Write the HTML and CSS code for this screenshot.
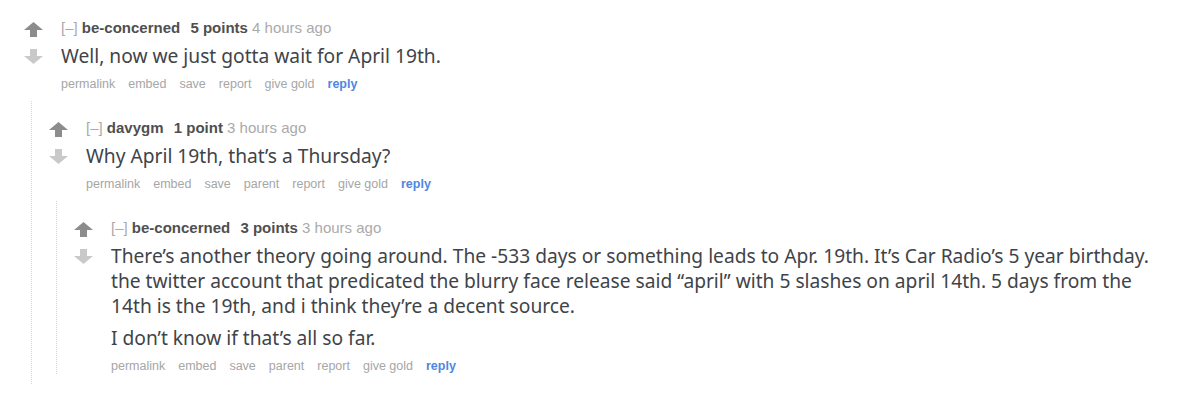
FILE: index.html
```html
<!DOCTYPE html>
<html lang="en">
<head>
    <meta charset="UTF-8">
    <meta name="viewport" content="width=device-width, initial-scale=1.0">
    <title>Comments</title>
    <link rel="stylesheet" href="styles.css">
</head>
<body>
    <div class="commentarea">
        <!-- primul comentariu -->
        <div class="comment">
            <div class="comment-row">
                <div class="midcol">
                    <svg class="arrow up" viewBox="0 0 19 15"><path d="M9.5 0 L19 8 H13 V15 H6 V8 H0 Z"/></svg>
                    <svg class="arrow down" viewBox="0 0 19 15"><path d="M9.5 15 L19 7 H13 V0 H6 V7 H0 Z"/></svg>
                </div>
                <div class="entry">
                    <p class="tagline">
                        <a class="expand" href="#">[–]</a>
                        <a class="author" href="#">be-concerned</a>
                        <span class="score">5 points</span>
                        <time>4 hours ago</time>
                    </p>
                    <div class="md">
                        <p>Well, now we just gotta wait for April 19th.</p>
                    </div>
                    <ul class="buttons">
                        <li><a href="#">permalink</a></li>
                        <li><a href="#">embed</a></li>
                        <li><a href="#">save</a></li>
                        <li><a href="#">report</a></li>
                        <li><a href="#">give gold</a></li>
                        <li><a class="reply" href="#">reply</a></li>
                    </ul>
                </div>
            </div>

            <div class="child">
                <div class="comment">
                    <div class="comment-row">
                        <div class="midcol">
                            <svg class="arrow up" viewBox="0 0 19 15"><path d="M9.5 0 L19 8 H13 V15 H6 V8 H0 Z"/></svg>
                            <svg class="arrow down" viewBox="0 0 19 15"><path d="M9.5 15 L19 7 H13 V0 H6 V7 H0 Z"/></svg>
                        </div>
                        <div class="entry">
                            <p class="tagline">
                                <a class="expand" href="#">[–]</a>
                                <a class="author" href="#">davygm</a>
                                <span class="score">1 point</span>
                                <time>3 hours ago</time>
                            </p>
                            <div class="md">
                                <p>Why April 19th, that’s a Thursday?</p>
                            </div>
                            <ul class="buttons">
                                <li><a href="#">permalink</a></li>
                                <li><a href="#">embed</a></li>
                                <li><a href="#">save</a></li>
                                <li><a href="#">parent</a></li>
                                <li><a href="#">report</a></li>
                                <li><a href="#">give gold</a></li>
                                <li><a class="reply" href="#">reply</a></li>
                            </ul>
                        </div>
                    </div>

                    <div class="child">
                        <div class="comment">
                            <div class="comment-row">
                                <div class="midcol">
                                    <svg class="arrow up" viewBox="0 0 19 15"><path d="M9.5 0 L19 8 H13 V15 H6 V8 H0 Z"/></svg>
                                    <svg class="arrow down" viewBox="0 0 19 15"><path d="M9.5 15 L19 7 H13 V0 H6 V7 H0 Z"/></svg>
                                </div>
                                <div class="entry">
                                    <p class="tagline">
                                        <a class="expand" href="#">[–]</a>
                                        <a class="author" href="#">be-concerned</a>
                                        <span class="score">3 points</span>
                                        <time>3 hours ago</time>
                                    </p>
                                    <div class="md">
                                        <p>There’s another theory going around. The -533 days or something leads to Apr. 19th. It’s Car Radio’s 5 year birthday. the twitter account that predicated the blurry face release said “april” with 5 slashes on april 14th. 5 days from the 14th is the 19th, and i think they’re a decent source.</p>
                                        <p>I don’t know if that’s all so far.</p>
                                    </div>
                                    <ul class="buttons">
                                        <li><a href="#">permalink</a></li>
                                        <li><a href="#">embed</a></li>
                                        <li><a href="#">save</a></li>
                                        <li><a href="#">parent</a></li>
                                        <li><a href="#">report</a></li>
                                        <li><a href="#">give gold</a></li>
                                        <li><a class="reply" href="#">reply</a></li>
                                    </ul>
                                </div>
                            </div>
                        </div>
                    </div>
                </div>
            </div>
        </div>
    </div>
</body>
</html>
```

FILE: styles.css
```css
body {
    background-color: #fff;
    margin: 0;
    font-family: 'Liberation Sans', Arial, sans-serif;
}

a {
    text-decoration: none;
}

.commentarea {
    padding: 18px 20px 0 24px;
}

.comment-row {
    display: flex;
    align-items: flex-start;
}

.midcol {
    width: 19px;
    flex: none;
    margin-right: 18px;
    padding-top: 4px;
    display: flex;
    flex-direction: column;
    gap: 12px;
}

.arrow {
    width: 19px;
    height: 15px;
    display: block;
}

.arrow.up {
    fill: #8c8c8c;
}

.arrow.down {
    fill: #c9c9c9;
}

.entry {
    flex: 1;
    min-width: 0;
}

.tagline {
    margin: 0;
    font-size: 15px;
    line-height: 20px;
    color: #aaa;
    white-space: nowrap;
}

.tagline .expand {
    color: #aaa;
}

.tagline .author {
    color: #4f4f4f;
    font-weight: bold;
    margin-right: 6px;
}

.tagline .score {
    color: #4f4f4f;
    font-weight: bold;
}

.tagline time {
    color: #aaa;
}

.md {
    margin: 5px 0 8px;
    font-family: 'Noto Sans', 'Open Sans', sans-serif;
    font-size: 19.2px;
    line-height: 25px;
    color: #404449;
}

.md p {
    margin: 0;
}

.md p + p {
    margin-top: 7px;
}

.buttons {
    list-style: none;
    margin: 0;
    padding: 0;
    display: flex;
    gap: 13px;
    font-size: 12.5px;
    line-height: 16px;
}

.buttons a {
    color: #a6a6a6;
}

.buttons a.reply {
    color: #4f86e1;
    font-weight: bold;
}

.child {
    margin: 9px 0 0 7px;
    padding: 17px 0 10px 17px;
    border-left: 1px dotted #d6d6d6;
}

.child .child {
    padding-bottom: 0;
}
```
